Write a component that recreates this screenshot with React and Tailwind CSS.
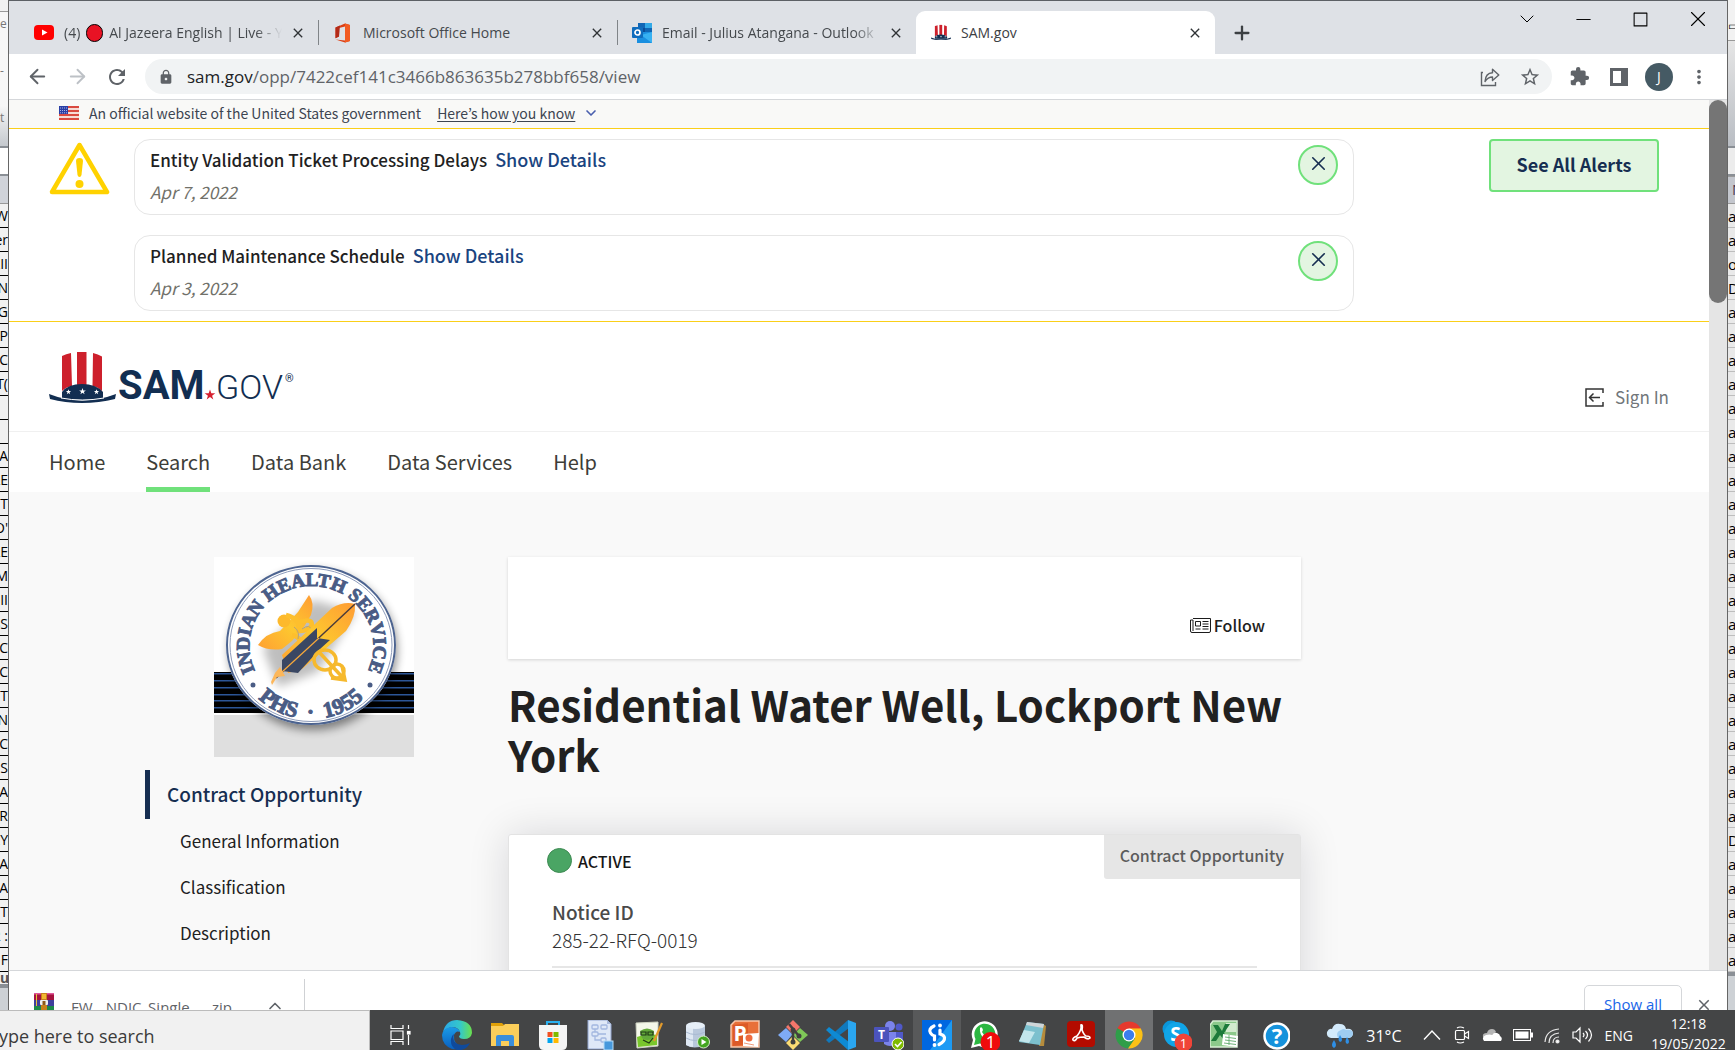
import React from "react";
import { ChevronDown, ChevronUp, Plus, Minus, Square, X, ArrowLeft, ArrowRight } from "lucide-react";
import { MdRefresh, MdLock, MdStarBorder, MdExtension, MdMoreVert, MdClose } from "react-icons/md";

const star = "M0,-5 L1.2,-1.6 L4.8,-1.6 L1.9,0.6 L3,4 L0,1.9 L-3,4 L-1.9,0.6 L-4.8,-1.6 L-1.2,-1.6 Z";

/* ---------- small brand icons ---------- */

function YouTubeIcon() {
  return (
    <svg width="20" height="17" viewBox="0 0 20 17" aria-hidden="true">
      <rect y="1" width="20" height="15" rx="4" fill="#f00" />
      <path d="M8 5.5 13.5 8.5 8 11.5z" fill="#fff" />
    </svg>
  );
}

function OfficeIcon() {
  return (
    <svg width="18" height="20" viewBox="0 0 18 20" aria-hidden="true">
      <path d="M1.500 4.500 11 .5l5 1.600v15.800l-5 1.600-9.500-3 9.500 1V3.400L5 5v8.600l-3.500 1.700z" fill="#dc3f14" />
      <path d="M11 .5l5 1.600v15.800l-5 1.600z" fill="#f25b22" />
      <path d="M1.500 4.500 6 2.600 5 13.600l-3.500 1.700z" fill="#b32a18" />
    </svg>
  );
}

function OutlookIcon() {
  return (
    <svg width="20" height="20" viewBox="0 0 20 20" aria-hidden="true">
      <rect x="6" y="0" width="14" height="11" fill="#1066b5" />
      <rect x="13" y="0" width="7" height="5" fill="#32a9e7" />
      <rect x="6" y="5" width="7" height="5" fill="#0a4d99" />
      <path d="M5 9 20 9v11H5z" fill="#1a8fe0" />
      <path d="M20 9v11L9 12z" fill="#37b1f2" />
      <rect y="4" width="11" height="11" rx="1" fill="#0f6cbd" />
      <circle cx="5.500" cy="9.500" r="2.500" fill="none" stroke="#fff" strokeWidth="1.700" />
    </svg>
  );
}

function HatIcon({ className }) {
  return (
    <svg className={className} viewBox="0 0 67 51" aria-hidden="true">
      <path d="M13 4Q17 2 22 1L23 34Q17 35 13 39z" fill="#cd202c" />
      <path d="M28 0h9.500v35H28z" fill="#cd202c" />
      <path d="M44 1Q49 2 53 4.500V39Q49 35 43.500 34z" fill="#cd202c" />
      <path d="M13 40Q19 32 33 32T54 40v8H13z" fill="#122e51" />
      <path d="M0 42Q33 55 67 42l-1 5Q50 51 33 51T1 47z" fill="#122e51" />
      <path d="M12 46Q33 50 55 46" stroke="#fff" strokeWidth="1" fill="none" />
      <g fill="#fff">
        <path d={star} transform="translate(19.500 40) scale(.55)" />
        <path d={star} transform="translate(33.500 39.500) scale(.7)" />
        <path d={star} transform="translate(47.500 40) scale(.55)" />
      </g>
    </svg>
  );
}

function FlagIcon() {
  return (
    <svg width="20" height="14" viewBox="0 0 20 14" aria-hidden="true">
      <rect width="20" height="14" fill="#f6dcd6" />
      {[0, 4, 8, 12].map((y) => (
        <rect key={y} y={y} width="20" height="2" fill="#d94a40" />
      ))}
      <rect width="9" height="8" fill="#2a3fa5" />
      <g fill="#aab4e6">
        {[1, 3, 5, 7].map((x) => (
          <g key={x}>
            <rect x={x} y="1.500" width="1" height="1" />
            <rect x={x} y="4" width="1" height="1" />
            <rect x={x} y="6.300" width="1" height="1" />
          </g>
        ))}
      </g>
    </svg>
  );
}

function WarningIcon() {
  return (
    <svg width="61" height="54" viewBox="0 0 61 54" aria-hidden="true">
      <path d="M30.500 3 58 50H3z" fill="none" stroke="#ffd200" strokeWidth="4.500" strokeLinejoin="round" />
      <path d="M27 19q0-3 3.500-3t3.500 3l-1.500 14q-.5 2-2 2t-2-2z" fill="#ffd200" />
      <circle cx="30.500" cy="42" r="4" fill="#ffd200" />
    </svg>
  );
}

function ShareIcon() {
  return (
    <svg width="20" height="20" viewBox="0 0 20 20" fill="none" stroke="#5f6368" strokeWidth="1.400" aria-hidden="true">
      <path d="M3 5.500H1.500V18.500H15.500V15" />
      <path d="M5 14.500Q5.500 6 12.500 5.700V2.200L18.800 8l-6.300 5.500V10Q8 10 5 14.500z" strokeLinejoin="round" />
    </svg>
  );
}

function SignInIcon() {
  return (
    <svg width="19" height="19" viewBox="0 0 19 19" fill="none" stroke="#333" strokeWidth="1.500" aria-hidden="true">
      <path d="M18 5V1H1v17h17v-4" />
      <path d="M15 9.500H5M8.500 5.500l-4 4 4 4" />
    </svg>
  );
}

function NewsIcon() {
  return (
    <svg width="21" height="15" viewBox="0 0 21 15" fill="none" stroke="#1b1b1b" strokeWidth="1" aria-hidden="true">
      <path d="M3 .5H20.500V13q0 1.500-1.500 1.500H2Q.5 14.500.5 13V2H3v11" />
      <path d="M5.500 3.500h5v4.500h-5zM12.500 3.500h6M12.500 6h6M12.500 8.500h6M5.500 11h5M12.500 11h6" />
    </svg>
  );
}

function ArchiveIcon() {
  return (
    <svg width="20" height="20" viewBox="0 0 20 20" aria-hidden="true">
      <rect width="20" height="7" fill="#a5123f" />
      <rect width="20" height="1.500" fill="#e0569a" />
      <rect y="7" width="20" height="6" fill="#3f3f9c" />
      <rect y="13" width="20" height="7" fill="#1c8a4a" />
      <path d="M2.500 1v12" stroke="#e8c33a" />
      <rect x="7" width="6" height="20" fill="#c7811c" />
      <rect x="8" y="1" width="4" height="5" fill="#f2b632" />
      <rect x="6" y="7" width="8" height="5" rx="1" fill="#f0f0f0" />
      <rect x="8.500" y="8" width="3" height="4" fill="#8b5a1d" />
    </svg>
  );
}

/* ---------- agency seal ---------- */

function Seal() {
  return (
    <svg className="block h-[200px] w-[200px]" viewBox="0 0 200 200" role="img" aria-label="Indian Health Service seal">
      <defs>
        <path id="ring-top" d="M97 149A62 60 0 1 1 98 149" />
        <path id="ring-bottom" d="M21 88A76 74 0 0 0 173 88" />
        <filter id="soft" x="-20%" y="-20%" width="140%" height="140%">
          <feGaussianBlur stdDeviation="5" />
        </filter>
        <linearGradient id="gold" x1="0" y1="1" x2="1" y2="0">
          <stop offset="0" stopColor="#ffa033" />
          <stop offset=".5" stopColor="#fdc82f" />
          <stop offset="1" stopColor="#ff9c34" />
        </linearGradient>
      </defs>
      <rect width="200" height="200" fill="#fff" />
      <rect y="115" width="200" height="41" fill="#000" />
      {[116, 123, 130, 137, 143, 150].map((y) => (
        <rect key={y} y={y} width="200" height="1.500" fill="#2c5698" />
      ))}
      <rect y="158" width="200" height="42" fill="#dfdfdf" />
      <ellipse cx="99" cy="93" rx="84" ry="80" fill="#000" opacity=".45" filter="url(#soft)" />
      <ellipse cx="97" cy="88" rx="85" ry="80" fill="#fff" />
      <ellipse cx="97" cy="88" rx="84" ry="79" fill="none" stroke="#4d6490" strokeWidth="2" />
      <ellipse cx="97" cy="88" rx="81" ry="76.500" fill="none" stroke="#8d9bba" strokeWidth="1" />
      <g fill="#4a5c85" fontFamily="'Liberation Serif', serif" fontWeight="700">
        <text textAnchor="middle" fontSize="19" stroke="#4a5c85" strokeWidth="1">
          <textPath href="#ring-top" startOffset="50%">INDIAN HEALTH SERVICE</textPath>
        </text>
        <text textAnchor="middle" fontSize="22" stroke="#4a5c85" strokeWidth="1">
          <textPath href="#ring-bottom" startOffset="50%">{"PHS \u00a0\u00b7\u00a0 1955"}</textPath>
        </text>
        <circle cx="39" cy="128" r="2.500" />
        <circle cx="156" cy="128" r="2.500" />
      </g>
      <g transform="translate(4 5)" opacity=".25" filter="url(#soft)">
        <path d="M45 87 95 38 138 50 100 110 60 125z" />
      </g>
      <path d="M44 88Q52 76 66 74L84 55 95 38Q101 46 97 58L90 70 78 84 68 92Q54 94 44 88z" fill="url(#gold)" />
      <circle cx="70" cy="64" r="6.500" fill="#fdb92c" />
      <path d="M72 58Q88 62 84 76M84 66q14-6 14 2-4 6-12 6M78 78q10 2 8 12" stroke="#fdbf2d" strokeWidth="4.500" fill="none" />
      <path d="M80 70q6 4 4 12M88 72q8-6 10 2" stroke="#b5a27a" strokeWidth="1" fill="none" />
      <path d="M68 98 118 51Q130 44 141 47 142 60 132 74L88 112 74 116z" fill="url(#gold)" />
      <path d="M141 47 62 121" stroke="#4b3b3a" strokeWidth="1.500" />
      <path d="M103 71V81l13 2-10 9-22 24-16-2V103z" fill="#3a4763" />
      <path d="M105 81 68 115" stroke="#f9a93a" strokeWidth="1.200" />
      <path d="M66 110l5 9-8 1-5 8-1-3 4-9z" fill="#fcb75a" />
      <g stroke="#f6b92d" strokeWidth="3.500" fill="none">
        <ellipse cx="111" cy="103" rx="11" ry="10" />
        <ellipse cx="123" cy="114" rx="7" ry="7" />
        <path d="M104 94 131 123M128 109l3 14-14-2" />
      </g>
    </svg>
  );
}

/* ---------- browser chrome ---------- */

function Tab({ icon, title, active, divider, fade, dot }) {
  return (
    <div
      className={
        active
          ? "flex h-[43px] min-w-0 flex-[0_1_299px] items-center rounded-t-[9px] bg-white pr-3 pl-[15px] text-[#3c4043]"
          : "flex h-[43px] min-w-0 flex-[0_1_299px] items-center pr-3 pl-[15px] text-[#45494d]"
      }
    >
      <span className="flex w-5 shrink-0 justify-center">{icon}</span>
      <span
        className={
          fade
            ? "ml-[10px] flex min-w-0 flex-1 items-center overflow-hidden whitespace-nowrap [mask-image:linear-gradient(to_right,black_88%,transparent)]"
            : "ml-[10px] flex min-w-0 flex-1 items-center overflow-hidden whitespace-nowrap"
        }
      >
        {dot && (
          <>
            (4)
            <i className="mx-[6px] block h-[18px] w-[17px] shrink-0 rounded-full border border-black bg-[#e81224]" />
          </>
        )}
        {title}
      </span>
      <button aria-label={"Close " + title} className="ml-2 flex h-4 w-4 shrink-0 items-center justify-center">
        <MdClose size={16} color="#303336" />
      </button>
      {divider && <span className="-mr-[13px] ml-3 h-[25px] w-px bg-[#808488]" />}
    </div>
  );
}

function TabStrip() {
  return (
    <div className="flex h-[54px] items-end border-t border-[#5c6065] bg-[#dee1e6] text-sm leading-5">
      <div className="flex min-w-0 flex-1 pl-[10px]">
        <Tab icon={<YouTubeIcon />} title="Al Jazeera English | Live - YouTube" dot divider fade />
        <Tab icon={<OfficeIcon />} title="Microsoft Office Home" divider />
        <Tab icon={<OutlookIcon />} title="Email - Julius Atangana - Outlook" fade />
        <Tab icon={<HatIcon className="h-[19px] w-5" />} title="SAM.gov" active />
        <button aria-label="New tab" className="flex h-[43px] w-[54px] items-center justify-center">
          <Plus size={22} strokeWidth={2.5} color="#3c4043" />
        </button>
      </div>
      <div className="flex h-[54px] items-start pr-px pt-[7px] text-black">
        <button aria-label="Search tabs" className="flex h-6 w-[57px] items-center justify-center"><ChevronDown size={24} strokeWidth={1} /></button>
        <button aria-label="Minimize" className="flex h-6 w-[57px] items-center justify-center"><Minus size={23} strokeWidth={1} /></button>
        <button aria-label="Maximize" className="flex h-6 w-[57px] items-center justify-center"><Square size={17} strokeWidth={1.500} className="[&>rect]:[rx:0]" /></button>
        <button aria-label="Close window" className="flex h-6 w-[57px] items-center justify-center"><X size={26} strokeWidth={1} /></button>
      </div>
    </div>
  );
}

function Toolbar() {
  return (
    <div className="flex h-[46px] items-center border-b border-[#d5d7da] bg-white pr-4 pl-2 text-[#5f6368]">
      <button aria-label="Back" className="flex w-10 justify-center"><ArrowLeft size={23} /></button>
      <button aria-label="Forward" className="flex w-10 justify-center text-[#bdc1c6]"><ArrowRight size={23} /></button>
      <button aria-label="Reload" className="flex w-10 justify-center"><MdRefresh size={24} /></button>
      <label className="ml-2 flex h-[35px] min-w-0 flex-1 items-center rounded-full bg-[#f1f3f4] pr-3 pl-[13px]">
        <MdLock size={16} />
        <span className="ml-[13px] flex-1 truncate text-[17px] leading-5">
          <span className="text-[#202124]">sam.gov</span>/opp/7422cef141c3466b863635b278bbf658/view
        </span>
        <button aria-label="Share" className="flex w-10 justify-center"><ShareIcon /></button>
        <button aria-label="Bookmark" className="-mr-[10px] flex w-10 justify-center"><MdStarBorder size={22} /></button>
      </label>
      <button aria-label="Extensions" className="ml-[7px] flex w-10 justify-center"><MdExtension size={21} /></button>
      <button aria-label="Side panel" className="flex w-10 justify-center">
        <svg width="18" height="18" viewBox="0 0 18 18" aria-hidden="true">
          <path d="M0 0h18v18H0zM3 3v12h8V3z" fillRule="evenodd" fill="#5f6368" />
        </svg>
      </button>
      <button aria-label="Profile" className="mx-[6px] flex h-7 w-7 items-center justify-center rounded-full bg-[#455a64] text-sm text-white">J</button>
      <button aria-label="Menu" className="-mr-2 flex w-10 justify-center"><MdMoreVert size={22} /></button>
    </div>
  );
}

/* ---------- page ---------- */

function AlertBox({ title, date }) {
  return (
    <article className="flex h-[76px] items-start rounded-2xl border border-[#e6e6e6] pt-[5px] pr-[15px] pl-[15px]">
      <div className="flex-1 pt-[2px]">
        <h3 className="text-[17px] leading-6 font-medium text-[#212121]">
          {title}
          <a href="#" className="ml-2 text-lg leading-6 font-medium text-[#1a4480]">Show Details</a>
        </h3>
        <p className="mt-2 text-[17px] leading-6 text-[#71716a] italic">{date}</p>
      </div>
      <button aria-label={"Dismiss " + title} className="flex h-10 w-10 items-center justify-center rounded-full border-2 border-[#70e17b] bg-[#e3f5e1] pb-[3px] text-[#162e51]">
        <X size={23} strokeWidth={1.700} />
      </button>
    </article>
  );
}

const navItems = ["Home", "Search", "Data Bank", "Data Services", "Help"];
const sideItems = ["General Information", "Classification", "Description"];

function Page() {
  return (
    <div className="min-w-0 flex-1 overflow-hidden bg-white font-['Noto_Sans_CJK_KR','Open_Sans',sans-serif]">
      <div className="flex h-7 items-center bg-[#f9f9f7] pb-[2px] pl-[50px] text-sm leading-5 text-[#3d4551]">
        <FlagIcon />
        <span className="ml-[10px]">An official website of the United States government</span>
        <button className="ml-4 flex items-center gap-2 text-[#3d4551]">
          <span className="underline underline-offset-2">Here’s how you know</span>
          <ChevronDown size={16} strokeWidth={2.500} color="#4a5fae" />
        </button>
      </div>

      <section className="flex items-start border-y border-[#facf19] py-[10px] pr-[50px] pl-10">
        <div className="pt-[3px]"><WarningIcon /></div>
        <div className="ml-6 flex flex-1 flex-col gap-5">
          <AlertBox title="Entity Validation Ticket Processing Delays" date="Apr 7, 2022" />
          <AlertBox title="Planned Maintenance Schedule" date="Apr 3, 2022" />
        </div>
        <button className="ml-[135px] h-[53px] w-[170px] rounded-[4px] border-2 border-[#70e17b] bg-[#e3f5e1] pb-[3px] text-lg font-bold text-[#162e51]">See All Alerts</button>
      </section>

      <header className="flex h-[110px] items-start justify-between border-b border-[#f0f0f0] px-10 pt-[30px]">
        <a href="#" aria-label="SAM.gov" className="block">
          <svg width="250" height="54" viewBox="0 0 250 54" fontFamily="Roboto,sans-serif" fill="#122e51">
            <svg width="67" height="51"><HatIcon /></svg>
            <text x="69" y="47" fontSize="40" fontWeight="700">SAM</text>
            <path d={star} fill="#d6202f" transform="translate(161 43) scale(1.100)" />
            <text x="167" y="47" fontSize="34" fontWeight="300">GOV</text>
            <text x="236" y="30" fontSize="11">®</text>
          </svg>
        </a>
        <a href="#" className="mt-[33px] flex items-center gap-[11px] text-[17px] leading-6 text-[#71767a]">
          <SignInIcon />
          Sign In
        </a>
      </header>

      <nav className="flex h-[60px] gap-[41px] pl-10 text-xl text-[#3d3d38]">
        {navItems.map((n) => (
          <a
            key={n}
            href="#"
            className={n === "Search" ? "flex h-full items-center border-b-[5px] border-[#70e17b] pt-[5px]" : "flex h-full items-center"}
          >
            {n}
          </a>
        ))}
      </nav>

      <main className="flex bg-[#f9f9f9] pt-[65px] pr-[24%] pb-10 pl-[8%]">
        <aside className="w-[363px] shrink-0">
          <div className="pl-[69px]"><Seal /></div>
          <a href="#" className="mt-[13px] flex h-[49px] items-center border-l-[5px] border-[#162e51] pl-[17px] text-[19px] font-medium text-[#162e51]">
            Contract Opportunity
          </a>
          <ul className="text-[17px] text-[#212121]">
            {sideItems.map((s) => (
              <li key={s}>
                <a href="#" className="flex h-[46px] items-center pb-[3px] pl-[35px]">{s}</a>
              </li>
            ))}
          </ul>
        </aside>

        <div className="min-w-0 flex-1">
          <div className="flex h-[102px] items-end justify-end bg-white pr-9 pb-[22px] shadow-[0_1px_3px_rgba(0,0,0,0.15)]">
            <button className="flex items-center gap-[3px] text-base leading-6 font-medium text-[#212121]">
              <NewsIcon />
              Follow
            </button>
          </div>
          <h1 className="mt-5 text-[42px] leading-[50px] font-bold text-[#212121]">Residential Water Well, Lockport New York</h1>
          <section className="mt-[55px] min-h-[300px] rounded-[3px] border border-[#e3e3e3] bg-white shadow-[0_0_40px_rgba(0,0,30,0.14)]">
            <div className="flex items-start justify-between">
              <p className="flex items-center gap-[6px] pt-[13px] pl-[38px] text-base leading-6 font-medium text-[#171717]">
                <i className="block h-[25px] w-[25px] rounded-full border border-[#3d8a52] bg-[#4aa564]" />
                ACTIVE
              </p>
              <span className="flex h-11 items-center rounded-bl-[3px] bg-[#e6e6e6] px-4 pb-1 text-base font-medium text-[#5c5c5c]">Contract Opportunity</span>
            </div>
            <dl className="mx-[43px] mt-[19px] border-b-2 border-[#e6e6e6] pb-3 text-[#4a4a4a]">
              <dt className="text-[19px] leading-7 font-medium">Notice ID</dt>
              <dd className="text-[19px] leading-7 font-light text-[#333]">285-22-RFQ-0019</dd>
            </dl>
          </section>
        </div>
      </main>
    </div>
  );
}

function DownloadBar() {
  return (
    <div className="flex h-10 items-start overflow-hidden border-t border-[#d5d7da] bg-white text-[15px] text-[#5f6368]">
      <button className="flex h-[58px] items-center pt-[14px] pl-[25px]">
        <span className="self-start pt-2"><ArchiveIcon /></span>
        <span className="ml-[17px] w-[167px] text-left whitespace-nowrap">FW__NDIC_Single_....zip</span>
      </button>
      <button aria-label="Download options" className="ml-[27px] pt-[25px]"><ChevronUp size={20} /></button>
      <span className="mt-2 ml-[19px] h-8 w-px bg-[#cfd1d4]" />
      <span className="flex-1" />
      <button className="mt-[14px] h-10 w-[98px] rounded-[5px] border border-[#d5d7da] pb-[2px] text-[15px] text-[#1a66e8]">Show all</button>
      <button aria-label="Close downloads" className="mr-[14px] ml-[13px] pt-[25px]"><MdClose size={18} /></button>
    </div>
  );
}

/* ---------- background spreadsheet edges ---------- */

const leftCells = ["W", "er", "LII", "N", "IG", "P", "C", "T(", "", "", "A", "LE", "T", "O'", "LE", "EM", "II", "SS", "EC", "FC", "ET", "N", "C", "IS", "A", "R", "RY", "VA", "A", "T", "R :", "F"];
const rightCells = ["at", "a", "ol", "Da", "a", "a", "a", "a", "a", "a", "a", "a", "a", "a", "a", "a", "a", "a", "a", "a", "a", "a", "a", "a", "a", "a", "Da", "a", "a", "a", "a", "a"];

function LeftEdge() {
  return (
    <div className="flex w-[9px] shrink-0 flex-col overflow-hidden border-r border-[#666] bg-[#f1f1f1] text-sm leading-6 text-black">
      <div className="h-[12px] shrink-0 border-b border-[#999]" />
      <div className="flex h-[134px] shrink-0 flex-col justify-between bg-linear-to-b from-[#f7f7f7] from-70% to-[#c5c9ce] pt-1 pb-5 text-xs text-[#777]">
        <span>e</span>
        <span>-</span>
        <span className="whitespace-nowrap">t F</span>
      </div>
      <div className="h-[30px] shrink-0 border-y-2 border-[#8a8f95] bg-white" />
      <div className="h-[28px] shrink-0 border-b border-[#999] bg-[#d0d3d9]" />
      {leftCells.map((c, i) => (
        <div key={i} className="flex h-6 shrink-0 justify-end overflow-hidden border-b border-black whitespace-nowrap">{c}</div>
      ))}
      <div className="h-3 shrink-0 text-sm leading-3 font-bold text-[#555]">ul</div>
      <div className="flex-1 border-t-4 border-[#8a8f95] bg-[#cdd1d5]" />
    </div>
  );
}

function RightEdge() {
  return (
    <div className="flex w-2 shrink-0 flex-col overflow-hidden border-l border-[#666] bg-[#e9e9e9] text-[15px] leading-6 text-black">
      <div className="h-[41px] shrink-0 border-b border-[#999] bg-[#f2f2f2] text-xs leading-[52px]">▭</div>
      <div className="h-[105px] shrink-0 bg-linear-to-b from-[#e6e6e6] to-[#b9bdc3]" />
      <div className="h-[30px] shrink-0 border-y-2 border-[#8a8f95] bg-[#ececec]" />
      <div className="h-[28px] shrink-0 border-y border-[#999] bg-[#c3c6cd] pl-1 text-[#4a3b55]">N</div>
      {rightCells.map((c, i) => (
        <div key={i} className="h-6 shrink-0 overflow-hidden border-b border-[#bdbdbd] whitespace-nowrap">{c}</div>
      ))}
      <div className="flex-1 border-t-4 border-[#8a8f95] bg-[#cdd1d5]" />
    </div>
  );
}

/* ---------- taskbar ---------- */

const ico = { width: 30, height: 30, viewBox: "0 0 30 30", "aria-hidden": true, className: "block shrink-0" };
const iconText = { fontFamily: "'Open Sans',sans-serif", fill: "#fff", textAnchor: "middle" };

const apps = [
  {
    name: "Edge",
    svg: (
      <svg {...ico}>
        <defs>
          <linearGradient id="edgeTop" x1="0" x2="1">
            <stop offset="0" stopColor="#2aa7e8" />
            <stop offset=".6" stopColor="#35c8c9" />
            <stop offset="1" stopColor="#6be04c" />
          </linearGradient>
          <linearGradient id="edgeLow" x1="0" y1="0" x2="0" y2="1">
            <stop offset="0" stopColor="#1a9be6" />
            <stop offset="1" stopColor="#0a5fc0" />
          </linearGradient>
        </defs>
        <path d="M1 12Q4 0 15 0 30 1 30 13q-1 6-8 6-5 0-5-3 2-1 1-4-2-5-8-5-6 1-9 5z" fill="url(#edgeTop)" />
        <path d="M0 15Q1 8 9 7q7 0 9 5-4-2-6 3-1 10 9 12-5 3-11 2Q0 25 0 15z" fill="url(#edgeLow)" />
        <path d="M12 14q-3 10 8 11 4 0 8-2-4 8-13 7Q8 27 9 19q1-4 3-5z" fill="#0f4a9c" />
      </svg>
    ),
  },
  {
    name: "File Explorer",
    svg: (
      <svg {...ico}>
        <path d="M1 3h11l3 3H1z" fill="#e0a008" />
        <path d="M1 6h12l2-2h14v22H1z" fill="#fbce5a" />
        <path d="M6 26V17q0-2 2-2h14q2 0 2 2v9h-5v-5h-8v5z" fill="#3a8edb" />
      </svg>
    ),
  },
  {
    name: "Store",
    svg: (
      <svg {...ico}>
        <path d="M9 5V2h12v3" fill="none" stroke="#2bb0ef" strokeWidth="2" />
        <path d="M1 5h28v20q0 5-5 5H6q-5 0-5-5z" fill="#f5f5f5" />
        <path d="M9.500 12h5v5h-5z" fill="#f25022" />
        <path d="M15.500 12h5v5h-5z" fill="#7fba00" />
        <path d="M9.500 18h5v5h-5z" fill="#00a4ef" />
        <path d="M15.500 18h5v5h-5z" fill="#ffb900" />
      </svg>
    ),
  },
  {
    name: "Model editor",
    svg: (
      <svg {...ico}>
        <path d="M2 0h19l4 4v25H2z" fill="#dfe8f7" stroke="#93a6cf" strokeWidth="1" />
        <path d="M21 0v4h4z" fill="#a9b9da" />
        <g fill="none" stroke="#a3b7e0" strokeWidth="1.300">
          <rect x="6" y="5" width="6" height="4" rx="1" /><rect x="15" y="5" width="6" height="4" rx="1" />
          <rect x="6" y="12" width="6" height="4" rx="1" /><rect x="15" y="18" width="5" height="4" rx="1" />
          <path d="M9 9v3M9 16v4h6M12 14h8" />
        </g>
        <rect x="18" y="21" width="9" height="9" fill="#4798dc" stroke="#b6dcf7" />
      </svg>
    ),
  },
  {
    name: "Notepad++",
    svg: (
      <svg {...ico}>
        <path d="M2 3 24 2v24L3 28z" fill="#f4f7ea" stroke="#cfd3c2" />
        <path d="M3 17q9-4 20-2v10L4 27z" fill="#79c62c" />
        <path d="M6 11q7-5 14 0l-1 7q-6 4-11 0z" fill="#63a83b" />
        <path d="M7 12h5v3H7zM14 12h5v3h-5zM9 20l6 3 4-5" fill="none" stroke="#1f3a16" strokeWidth="1.200" />
        <path d="M28 3 20 21" stroke="#e29a2b" strokeWidth="2.200" />
      </svg>
    ),
  },
  {
    name: "Database",
    svg: (
      <svg {...ico}>
        <path d="M4 6v19q8 5 19 0V6z" fill="#b9c8dc" />
        <path d="M4 6v19q4 2 7 2V6z" fill="#dfe8f3" />
        <ellipse cx="13.500" cy="5.500" rx="9.500" ry="3.500" fill="#e6eef7" />
        <path d="M4 12q9 5 19 0M4 18q9 5 19 0" fill="none" stroke="#a9bad2" />
        <circle cx="21.500" cy="22" r="6" fill="#43a520" stroke="#d4edc7" />
        <path d="M19.500 19v6l5-3z" fill="#fff" />
      </svg>
    ),
  },
  {
    name: "PowerPoint",
    svg: (
      <svg {...ico}>
        <path d="M5 1h24v26H1V5z" fill="#e8703a" stroke="#f9c6ab" strokeWidth="1.500" />
        <path d="M3 5 18 3v21L3 26z" fill="#d2481a" opacity=".55" />
        <text x="10" y="21" fontSize="21" fontWeight="700" {...iconText}>P</text>
        <path d="M13 14l16-1-1 14-15-1z" fill="#fff" />
        <circle cx="19" cy="18" r="3.500" fill="#ef6b3f" />
        <path d="M14 23l10 2" stroke="#ef9a7a" />
      </svg>
    ),
  },
  {
    name: "Git",
    svg: (
      <svg {...ico}>
        <path d="M15 0 22 7 15 14 8 7z" fill="#f4766b" />
        <path d="M8 8 14.500 14.500 8 22 0 15z" fill="#7fabf5" />
        <path d="M22 8 30 15 22 22 15 15z" fill="#7fc858" />
        <path d="M15 16 22 23 15 30 8 23z" fill="#fbdc74" />
        <path d="M11 4l4 5v13M15 9l6 7" stroke="#40403f" strokeWidth="2.500" fill="none" />
        <g fill="#40403f"><circle cx="15" cy="10" r="2.500" /><circle cx="15" cy="22" r="2.500" /><circle cx="21" cy="16" r="2.500" /></g>
      </svg>
    ),
  },
  {
    name: "VS Code",
    svg: (
      <svg {...ico}>
        <path d="M0 20 22 0l1 8L3 23z" fill="#1079bd" />
        <path d="M0 10 3 7 23 22l-1 8z" fill="#0e8ad3" />
        <path d="M22 0l8 3v24l-8 3z" fill="#2aa6f0" />
      </svg>
    ),
  },
  {
    name: "Teams",
    svg: (
      <svg {...ico}>
        <circle cx="16" cy="6" r="5" fill="#7b83eb" />
        <circle cx="25" cy="7" r="3.500" fill="#5059c9" />
        <path d="M10 12h12v12q-6 4-12 0z" fill="#7b83eb" />
        <path d="M22 12h7v9q-3 3-7 1z" fill="#5059c9" />
        <rect y="7" width="15" height="15" rx="1" fill="#4b53bc" />
        <text x="7.500" y="19" fontSize="12" fontWeight="700" {...iconText}>T</text>
        <circle cx="24" cy="24" r="6" fill="#7fba00" stroke="#fff" />
        <path d="M21 24l2.500 2.500L27.500 22" fill="none" stroke="#fff" strokeWidth="1.600" />
      </svg>
    ),
  },
  {
    name: "Snippet tool",
    open: true,
    svg: (
      <svg {...ico}>
        <rect width="30" height="30" fill="#0067e0" />
        <path d="M30 0v30H8z" fill="#1c9af4" />
        <g fill="none" stroke="#fff" strokeWidth="3.200" strokeLinecap="round">
          <path d="M12 6Q6 9 8.500 13q1.500 2.500 4 3v4" />
          <path d="M18 10v4q4 1 4.500 3.500.5 4-5.500 7" />
        </g>
        <circle cx="18" cy="5.500" r="1.900" fill="#fff" />
        <circle cx="12.500" cy="25" r="1.900" fill="#fff" />
      </svg>
    ),
  },
  {
    name: "WhatsApp",
    svg: (
      <svg {...ico}>
        <path d="M1 28 3 20A13 13 0 1 1 9 26z" fill="#fff" />
        <path d="M4 25l1.500-6A10.500 10.500 0 1 1 10 23.500z" fill="#2cb742" />
        <path d="M10 8q2-2 3 2l-1 2q2 4 5 5l2-1 3 2q-2 4-7 1-6-4-5-11z" fill="#fff" />
        <circle cx="20.500" cy="22" r="10" fill="#f00b0b" />
        <text x="20.500" y="28" fontSize="17" {...iconText}>1</text>
      </svg>
    ),
  },
  {
    name: "Notepad",
    svg: (
      <svg {...ico}>
        <path d="M25 4 28 6 26 26H21z" fill="#b58b3c" />
        <path d="M9 2 26 4 22 25 1 22z" fill="#7cc0ce" />
        <path d="M9 2 26 4 25 8 8 5z" fill="#cfd5d8" />
        <path d="M6 10l11 2-6 11-10-2z" fill="#c3e6ec" />
      </svg>
    ),
  },
  {
    name: "Acrobat",
    svg: (
      <svg {...ico}>
        <rect x="1" y="1" width="28" height="26" rx="4" fill="#b30b00" />
        <path d="M7 20q-1-2 4-4 5-6 4-11 2-1 1 5 2 5 4 6 4 0 4 2-2 2-6-1-4 0-7 1-2 4-4 2z" fill="none" stroke="#fff" strokeWidth="1.700" />
      </svg>
    ),
  },
  {
    name: "Chrome",
    active: true,
    svg: (
      <svg {...ico}>
        <path d="M15 15 3.300 8.200A13.500 13.500 0 0 1 26.700 8.200z" fill="#e5392e" />
        <path d="M15 15 3.300 8.200A13.500 13.500 0 0 0 14 28.400l7-10z" fill="#2f9e49" />
        <path d="M15 8.200H26.700A13.500 13.500 0 0 1 14 28.400l7-10z" fill="#fbc116" />
        <path d="M15 8.200H26.700L22 4H8z" fill="#e5392e" />
        <circle cx="15" cy="15" r="6.500" fill="#fff" />
        <circle cx="15" cy="15" r="5.200" fill="#3b7ded" />
      </svg>
    ),
  },
  {
    name: "Skype",
    svg: (
      <svg {...ico}>
        <circle cx="9" cy="9" r="8.500" fill="#0b96da" />
        <circle cx="20" cy="20" r="8.500" fill="#0b96da" />
        <circle cx="14.500" cy="14.500" r="12.500" fill="#10a5e8" />
        <text x="13.500" y="21" fontSize="19" fontWeight="700" {...iconText}>S</text>
        <circle cx="21.500" cy="22.500" r="9" fill="#f04438" />
        <text x="21.500" y="27.500" fontSize="13" {...iconText}>1</text>
      </svg>
    ),
  },
  {
    name: "Excel",
    svg: (
      <svg {...ico}>
        <path d="M3 1h24v26H0V5z" fill="#8cc98b" stroke="#d8efd5" strokeWidth="1.500" />
        <path d="M16 3h10v9H16z" fill="#d3ebcf" />
        <path d="M3 5h5l4 6 3-7h5l-6 9 6 7h-6l-4-5-4 6H1l6-9z" fill="#1c7a3a" />
        <path d="M13 14l15 2-1 11-15-2z" fill="#fff" />
        <path d="M15 17l11 1.500M15 20l11 1.500M14 23l12 1.500M19 15v10" stroke="#6fb27a" />
      </svg>
    ),
  },
  {
    name: "Help",
    svg: (
      <svg {...ico} width={34} height={30} viewBox="0 0 34 30">
        <circle cx="21" cy="16" r="12.500" fill="#1592dc" stroke="#fff" strokeWidth="2.500" />
        <text x="21" y="24" fontSize="22" fontWeight="700" {...iconText}>?</text>
      </svg>
    ),
  },
];

function Taskbar() {
  return (
    <footer className="flex h-10 shrink-0 items-stretch overflow-hidden bg-[#444546] text-white">
      <label className="flex w-[370px] shrink-0 items-center border-t border-r border-[#bcbcbc] bg-[#f1f1f1]">
        <span className="sr-only">Search</span>
        <input
          type="text"
          placeholder="Type here to search"
          className="-ml-[11px] w-full bg-transparent pt-[10px] text-lg leading-6 text-[#3b3b3b] outline-none placeholder:text-[#3b3b3b]"
        />
      </label>
      <button aria-label="Task view" className="ml-[6px] flex w-12 shrink-0 justify-center pt-[15px]">
        <svg width="21" height="20" viewBox="0 0 21 20" fill="none" stroke="#fff" strokeWidth="1.200" aria-hidden="true">
          <path d="M1 0v3.500h12V0M1 20v-3.500h12V20M1 6h12v8.500H1zM18.500 0v4M18.500 10v10" />
          <rect x="17.500" y="6.500" width="2.500" height="2.500" fill="#fff" />
        </svg>
      </button>
      <div className="ml-[9px] flex shrink-0">
        {apps.map((a) => (
          <button
            key={a.name}
            aria-label={a.name}
            className={
              a.active
                ? "flex h-10 w-12 justify-center bg-[#707172] pt-[10px]"
                : a.open
                  ? "flex h-10 w-12 justify-center bg-[#58595a] pt-[10px]"
                  : "flex h-10 w-12 justify-center pt-[10px]"
            }
          >
            {a.svg}
          </button>
        ))}
      </div>
      <div className="flex min-w-0 flex-1 items-start justify-end">
        <button className="flex items-center gap-3 pt-3 text-base leading-7">
          <svg width="28" height="28" viewBox="0 0 28 28" aria-hidden="true">
            <path d="M5 16Q0 15 1 10q2-4 5-3 2-6 8-5 5 0 6 5 7-1 7 5-1 4-5 4z" fill="#d3eafb" />
            <path d="M12 16q-3-6 3-8 3-2 5 0 7-1 7 4-1 4-5 4z" fill="#9fcdf2" />
            <path d="M8 18q-4 6 0 8 4-2 0-8zM14 13q-3 5 0 7 4-1 0-7zM21 15q-3 5 0 7 4-1 0-7z" fill="#2e8fe6" />
          </svg>
          31°C
        </button>
        <div className="ml-[21px] flex h-10 items-center gap-[11px] pt-[10px]">
          <svg width="20" height="12" viewBox="0 0 20 12" fill="none" stroke="#fff" strokeWidth="1.400" aria-hidden="true">
            <path d="M1 10.500 9 2l8 8.500" />
          </svg>
          <svg width="17" height="18" viewBox="0 0 17 18" fill="none" stroke="#fff" strokeWidth="1.200" aria-hidden="true">
            <rect x="1.500" y="4.500" width="9" height="9" rx="1" /><path d="M10.500 8l4-2.500v7l-4-2.500M3 2q3-2 7 0M3 16q3 2 7 0" />
          </svg>
          <svg width="20" height="14" viewBox="0 0 20 14" aria-hidden="true">
            <path d="M1 9Q0 5 5 5 6 1 10 1q3 0 4 3l-9 7z" fill="#b5b5b5" />
            <path d="M2 13q-3-4 2-6 4-1 6 0 2-3 5-2 3 1 3 3 3 2 1 5z" fill="#fff" />
          </svg>
          <svg width="20" height="12" viewBox="0 0 20 12" aria-hidden="true">
            <rect x=".5" y=".5" width="17" height="11" fill="none" stroke="#fff" /><rect x="2.500" y="2.500" width="13" height="7" fill="#fff" /><rect x="18" y="3.500" width="2" height="5" fill="#fff" />
          </svg>
          <svg width="17" height="17" viewBox="0 0 17 17" fill="none" stroke="#e9e9e9" strokeWidth="1.200" aria-hidden="true">
            <path d="M1 15Q2 3 15 2M5 16Q5 7 15 6M9 16q0-6 6-6" /><circle cx="13.500" cy="14.500" r="1.500" fill="#fff" />
          </svg>
          <svg width="21" height="18" viewBox="0 0 21 18" fill="none" stroke="#fff" strokeWidth="1.200" aria-hidden="true">
            <path d="M1 6h3l4-4v14l-4-4H1zM11 7q2 2 0 4M13.500 5q4 4 0 8M16.500 2.500q6 6.500 0 13" />
          </svg>
        </div>
        <span className="ml-3 pt-[14px] text-sm leading-6">ENG</span>
        <div className="mr-2 ml-[17px] flex w-[77px] flex-col items-center pt-1 text-sm leading-5 whitespace-nowrap">
          <span>12:18</span>
          <span>19/05/2022</span>
        </div>
      </div>
    </footer>
  );
}

export default function App() {
  return (
    <div className="flex h-screen flex-col overflow-hidden font-['Open_Sans',sans-serif]">
      <div className="flex min-h-0 flex-1">
        <LeftEdge />
        <div className="flex min-w-0 flex-1 flex-col bg-white">
          <TabStrip />
          <Toolbar />
          <div className="flex min-h-0 flex-1">
            <Page />
            <div className="w-[18px] shrink-0 bg-[#e5e5e5]">
              <div className="h-[203px] w-full rounded-full bg-[#757575]" />
            </div>
          </div>
          <DownloadBar />
        </div>
        <RightEdge />
      </div>
      <Taskbar />
    </div>
  );
}
